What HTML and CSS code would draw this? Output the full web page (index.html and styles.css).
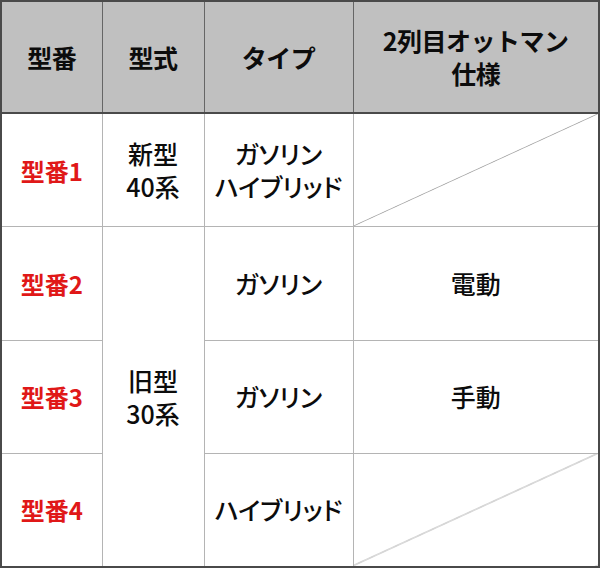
FILE: index.html
```html
<!DOCTYPE html>
<html lang="ja">
<head>
<meta charset="utf-8">
<link rel="stylesheet" href="styles.css">
</head>
<body>
<div class="frame">
<table class="spec">
  <colgroup>
    <col class="c1"><col class="c2"><col class="c3"><col class="c4">
  </colgroup>
  <thead>
    <tr class="head">
      <th>型番</th>
      <th>型式</th>
      <th>タイプ</th>
      <th>2列目オットマン<br>仕様</th>
    </tr>
  </thead>
  <tbody>
    <tr class="row">
      <td class="model">型番1</td>
      <td>新型<br>40系</td>
      <td>ガソリン<br>ハイブリッド</td>
      <td class="slash"></td>
    </tr>
    <tr class="row">
      <td class="model">型番2</td>
      <td rowspan="3">旧型<br>30系</td>
      <td>ガソリン</td>
      <td>電動</td>
    </tr>
    <tr class="row">
      <td class="model">型番3</td>
      <td>ガソリン</td>
      <td>手動</td>
    </tr>
    <tr class="row">
      <td class="model">型番4</td>
      <td>ハイブリッド</td>
      <td class="slash"></td>
    </tr>
  </tbody>
</table>
</div>
</body>
</html>
```
FILE: styles.css
```css
html, body {
  margin: 0;
  padding: 0;
  background: #ffffff;
}
.frame {
  width: 600px;
  height: 568px;
  box-sizing: border-box;
  border: 2px solid #4a4a4a;
}
.spec {
  width: 100%;
  height: 100%;
  border-collapse: collapse;
  table-layout: fixed;
  border-style: hidden;
  font-family: "Noto Sans CJK JP", "Noto Sans", sans-serif;
  color: #0c0c0c;
}
.c1 { width: 100px; }
.c2 { width: 102px; }
.c3 { width: 149px; }
.c4 { width: 245px; }
.spec th, .spec td {
  padding: 0;
  text-align: center;
  vertical-align: middle;
  font-size: 25px;
  line-height: 33px;
}
.head th {
  height: 110px;
  background: #c0c0c0;
  font-weight: 700;
  letter-spacing: -0.5px;
  border-left: 1px solid #666;
  border-right: 1px solid #666;
  border-bottom: 2px solid #4a4a4a;
}
.row td {
  height: 112px;
  font-weight: 500;
  font-feature-settings: "palt";
  border: 1px solid #b4b4b4;
}
.spec .model {
  color: #e01818;
  font-weight: 700;
  font-size: 24px;
}
.slash {
  background: linear-gradient(to bottom right, transparent calc(50% - 0.7px), #9a9a9a 50%, transparent calc(50% + 0.7px));
}
```
